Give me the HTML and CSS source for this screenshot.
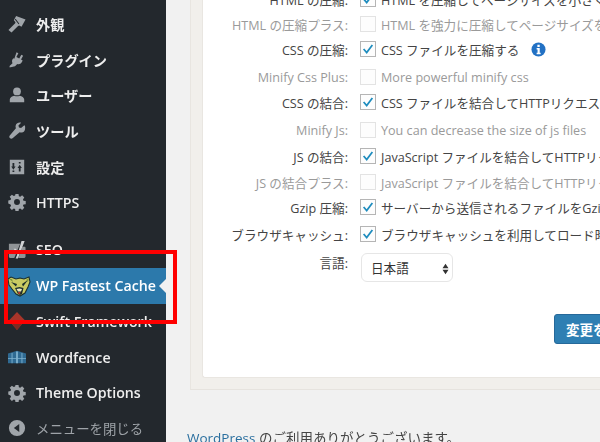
FILE: index.html
```html
<!DOCTYPE html>
<html lang="ja">
<head>
<meta charset="utf-8">
<title>WP Fastest Cache</title>
<link rel="stylesheet" href="styles.css">
</head>
<body>
<div class="page">
  <nav class="sidebar">
    <a class="item"><svg class="ico" viewBox="0 0 20 20"><path d="M9 1l10.500 4-4.500 8-2.600-1.300-1.200.6-7.300 7.200-3.400-2.800L8 9.200l.3-1.200-1.800-2.300zM7.600 5l4.200 5.400.8-.6L8.400 4.300z" fill-rule="evenodd"/></svg><span>外観</span></a>
    <a class="item"><svg class="ico" viewBox="0 0 20 20"><path d="M9.500 1.500l2 1-2.200 4.200 3.200 1.700 2.300-4.200 2 1-2.300 4.300 1.800 1-1 2c-1 1.800-3 2.700-5 2l-2.500 2.500L3 18H1.500l.5-1.500L5 13.500C4 11.500 4.500 9.500 6 8l1 .5z"/></svg><span>プラグイン</span></a>
    <a class="item"><svg class="ico" viewBox="0 0 20 20"><circle cx="10" cy="6" r="4.300"/><path d="M2 18v-3c0-2.500 2.500-3.500 5-4.300 1.800 1 4.200 1 6 0 2.500.8 5 1.800 5 4.300v3z"/></svg><span>ユーザー</span></a>
    <a class="item"><svg class="ico" viewBox="0 0 20 20"><path d="M17.800 3.800l-3.300 3-2.300-.6-.6-2.300 3-3c-2.600-.7-5.200.4-6 2.700-.4 1.200-.3 2.400.2 3.400L2.200 14.600c-1 1-1 2.400-.1 3.300.9.900 2.300.9 3.300-.1l7.500-6.500c1.100.5 2.300.6 3.500.2 2.300-.8 3.200-4.200 2.400-7.700z"/></svg><span>ツール</span></a>
    <a class="item"><svg class="ico" viewBox="0 0 20 20"><path fill-rule="evenodd" d="M2 2h16v16H2zM5 5.500v4H3.600L6 13l2.400-3.500H7v-4zM14 15v-4h1.400L13 7.500 10.600 11H12v4zM5 14h2v1.500H5zM12 4.500h2V6h-2z"/></svg><span>設定</span></a>
    <a class="item"><svg class="ico" viewBox="0 0 20 20"><path fill-rule="evenodd" d="M8.300 1h3.400l.4 2.500 1.500.6 2.100-1.500 2.400 2.400-1.500 2.100.6 1.500 2.500.4v3.400l-2.500.4-.6 1.500 1.500 2.100-2.400 2.400-2.100-1.500-1.500.6-.4 2.500H8.300l-.4-2.500-1.500-.6-2.100 1.500-2.400-2.400 1.500-2.100-.6-1.500L.3 11.700V8.300l2.500-.4.6-1.500-1.500-2.100 2.400-2.400 2.100 1.500 1.500-.6zM10 6.700a3.300 3.300 0 1 0 0 6.600 3.300 3.300 0 0 0 0-6.600z"/></svg><span>HTTPS</span></a>
    <a class="item item-seo"><svg class="ico" viewBox="0 0 20 20"><path fill="#8f9396" d="M1 3h12.500L7 19H3c-1.500 0-2-1-2-2zM16 6.500h2.500c.6 0 1 .4 1 1V17c0 1.200-.8 2-2 2H11.500z"/><path fill="#d0d2d4" d="M15 0h3.500L11 19.500H8.500l1.800-4.500-4-6.500h2.400l2.600 4z"/></svg><span>SEO</span></a>
    <a class="item item-active"><svg class="ico ico-tiger" viewBox="0 0 24 22"><path fill="#c9cb62" stroke="#1a2f30" stroke-width="1.100" d="M1 4l3-2 5 2 4-1 4 1 5-2 1 5-2 5-3 6-5 3-4-2-4-5-3-4z"/><path fill="#1c2f2c" d="M4 7l6 2-1 2.500zM21 5l-6 4 1 2.500zM8 13l4.500-1 4 1-1.500 6-2 1-2-1z"/><path fill="#e8e6c0" d="M9.500 14l3-.6 2.500.6-1 2.500h-3z"/><path fill="#b5392c" d="M11 17h2.500l-.5 2h-1.500z"/><path fill="#7f9440" d="M2 4l3 0 1 3zM22 3l-3 2 2 2z"/></svg><span>WP Fastest Cache</span><i class="pointer"></i></a>
    <a class="item"><svg class="ico ico-diamond" viewBox="0 0 20 20"><path fill="#a8352a" d="M10 0l9 9.500-9 10.500-9-10.500z"/><path fill="#7f2a22" d="M1 9.500h18L10 20z"/></svg><span>Swift Framework</span></a>
    <a class="item"><svg class="ico ico-fence" viewBox="0 0 20 20"><path fill="#2f6a92" d="M0 6l10-3 10 3v11H0z"/><path fill="#7fb2cf" d="M9 4h2v13H9zM0 11h20v1H0zM4 5.500h1V17H4zM15 5.500h1V17h-1z"/></svg><span>Wordfence</span></a>
    <a class="item"><svg class="ico" viewBox="0 0 20 20"><path fill-rule="evenodd" d="M8.300 1h3.400l.4 2.500 1.500.6 2.100-1.500 2.400 2.400-1.500 2.100.6 1.500 2.500.4v3.400l-2.500.4-.6 1.500 1.500 2.100-2.400 2.400-2.100-1.500-1.500.6-.4 2.500H8.300l-.4-2.500-1.500-.6-2.100 1.500-2.400-2.400 1.500-2.100-.6-1.500L.3 11.700V8.300l2.500-.4.6-1.500-1.500-2.100 2.400-2.400 2.100 1.500 1.500-.6zM10 6.700a3.300 3.300 0 1 0 0 6.600 3.300 3.300 0 0 0 0-6.600z"/></svg><span>Theme Options</span></a>
    <a class="item item-close"><svg class="ico" viewBox="0 0 20 20"><path fill-rule="evenodd" d="M10 1a9 9 0 1 1 0 18 9 9 0 0 1 0-18zM12.500 5.500L6.500 10l6 4.500z"/></svg><span>メニューを閉じる</span></a>
  </nav>

  <main class="main">
    <section class="panel">
      <div class="card">
        <div class="form">
          <div class="row"><span class="label">HTML の圧縮:</span><span class="box"><svg viewBox="0 0 16 16"><path d="M3 8l3.500 4L13 3.500" /></svg></span><span class="text">HTML を圧縮してページサイズを小さくする</span></div>
          <div class="row row-off gap-1"><span class="label">HTML の圧縮プラス:</span><span class="box"></span><span class="text">HTML を強力に圧縮してページサイズを小さくする</span></div>
          <div class="row gap-1"><span class="label">CSS の圧縮:</span><span class="box"><svg viewBox="0 0 16 16"><path d="M3 8l3.500 4L13 3.500" /></svg></span><span class="text">CSS ファイルを圧縮する</span><svg class="info" viewBox="0 0 16 16"><circle cx="8" cy="8" r="7.500"/><path class="info-i" d="M6.800 3h2.500v2.200H6.800zM6 6.500h3.300V11.500h1V13H6v-1.500h1V8H6z"/></svg></div>
          <div class="row row-off gap-4"><span class="label">Minify Css Plus:</span><span class="box"></span><span class="text">More powerful minify css</span></div>
          <div class="row gap-1"><span class="label">CSS の結合:</span><span class="box"><svg viewBox="0 0 16 16"><path d="M3 8l3.500 4L13 3.500" /></svg></span><span class="text">CSS ファイルを結合してHTTPリクエストを減らす</span></div>
          <div class="row row-off gap-4"><span class="label">Minify Js:</span><span class="box"></span><span class="text">You can decrease the size of js files</span></div>
          <div class="row gap-2"><span class="label">JS の結合:</span><span class="box"><svg viewBox="0 0 16 16"><path d="M3 8l3.500 4L13 3.500" /></svg></span><span class="text">JavaScript ファイルを結合してHTTPリクエストを減らす</span></div>
          <div class="row row-off gap-2"><span class="label">JS の結合プラス:</span><span class="box box-faint"></span><span class="text">JavaScript ファイルを結合してHTTPリクエストを減らす</span></div>
          <div class="row gap-1"><span class="label">Gzip 圧縮:</span><span class="box"><svg viewBox="0 0 16 16"><path d="M3 8l3.500 4L13 3.500" /></svg></span><span class="text">サーバーから送信されるファイルをGzipで圧縮する</span></div>
          <div class="row gap-3"><span class="label">ブラウザキャッシュ:</span><span class="box"><svg viewBox="0 0 16 16"><path d="M3 8l3.500 4L13 3.500" /></svg></span><span class="text">ブラウザキャッシュを利用してロード時間を短縮する</span></div>
          <div class="row row-lang"><span class="label">言語:</span><span class="select">日本語<svg class="updown" viewBox="0 0 8 14"><path d="M4 1l3.500 5h-7zM4 13L.5 8h7z"/></svg></span></div>
        </div>
        <div class="actions"><button class="save">変更を保存</button></div>
      </div>
    </section>
    <footer class="foot"><a class="foot-link">WordPress</a> のご利用ありがとうございます。</footer>
  </main>
</div>
<div class="callout"></div>
</body>
</html>
```

FILE: styles.css
```css
* { box-sizing: border-box; }
html, body { margin: 0; height: 442px; overflow: hidden; background: #f1f1f1; }
body { font-family: "Open Sans", "Noto Sans CJK JP", sans-serif; position: relative; }

.page { display: flex; width: 600px; height: 442px; filter: blur(0.45px); }

.sidebar {
  width: 166px;
  flex: none;
  height: 442px;
  padding-top: 6px;
  background: #23282d;
  overflow: hidden;
}
.item {
  display: flex;
  align-items: center;
  height: 35.7px;
  padding-left: 8px;
  position: relative;
  color: #eeeeee;
  font-size: 14.2px;
  font-weight: 600;
  white-space: nowrap;
}
.ico { width: 18px; height: 18px; flex: none; margin-right: 10px; fill: #a0a5aa; }
.item-seo { margin-top: 12px; }
.item-active { background: #2c79ab; color: #fff; }
.item-close { color: #9ea3a8; font-size: 13.4px; font-weight: 400; }
.ico-tiger { width: 24px; height: 22px; margin-left: -1px; margin-right: 5px; }
.pointer {
  position: absolute;
  right: 0;
  top: 50%;
  margin-top: -7px;
  border: 7px solid transparent;
  border-right-color: #f1f1f1;
  border-left-width: 0;
}

.main { flex: 1; min-width: 0; overflow: hidden; padding-left: 24px; }
.panel {
  width: 500px;
  height: 390px;
  padding: 0 0 11px 11px;
  background: #f1efeb;
  border-left: 1px solid #e8e5e0;
  border-bottom: 1px solid #e6e3de;
}
.card {
  display: flex;
  flex-direction: column;
  height: 378px;
  background: #fff;
  border-left: 1px solid #e9e6e1;
  border-bottom: 1px solid #e9e6e1;
  border-bottom-left-radius: 3px;
  overflow: hidden;
}
.form { margin-top: -13px; }
.row {
  display: flex;
  align-items: center;
  height: 24px;
  color: #444;
  font-size: 12.6px;
  white-space: nowrap;
}
.gap-1 { margin-top: 1px; }
.gap-2 { margin-top: 2px; }
.gap-3 { margin-top: 3px; }
.gap-4 { margin-top: 4px; }
.row-off { color: #9a9a9a; }
.label { width: 145px; flex: none; text-align: right; margin-right: 12px; }
.box {
  display: flex;
  width: 16px;
  height: 16px;
  flex: none;
  margin-right: 5px;
  background: #fdfdfd;
  border: 1px solid #b5b5b5;
}
.row-off .box { border-color: #e3e3e3; }
.box svg { width: 14px; height: 14px; fill: none; stroke: #1e8cbe; stroke-width: 2; }
.text { font-size: 12.6px; }
.info { width: 15px; height: 15px; margin-left: 12px; flex: none; fill: #2271c4; }
.info-i { fill: #fff; }
.row-lang { margin-top: 7px; height: 30px; align-items: flex-start; }
.row-lang .label { margin-right: 13px; }
.select {
  position: relative;
  display: flex;
  align-items: center;
  width: 92px;
  height: 29px;
  padding-left: 9px;
  background: #fff;
  border: 1px solid #e6e6e6;
  border-radius: 6px;
  color: #333;
  font-size: 12.6px;
}
.updown { position: absolute; right: 3px; top: 9px; width: 7px; height: 12px; fill: #333; }
.actions { margin-top: auto; margin-bottom: 33px; padding-left: 351px; white-space: nowrap; }
.save {
  display: block;
  width: 90px;
  height: 30px;
  padding: 0 0 0 11px;
  text-align: left;
  background: #2e7fb3;
  border: 1px solid #26699a;
  border-radius: 3px;
  color: #fff;
  font: 600 13.500px "Open Sans", "Noto Sans CJK JP", sans-serif;
}
.foot { margin: 37px 0 0 -3px; color: #444; font-size: 13.500px; white-space: nowrap; }
.foot-link { color: #2a6f9f; }

.callout {
  position: absolute;
  left: 4px;
  top: 250px;
  width: 173px;
  height: 74px;
  border: 4px solid #f00;
}
```
